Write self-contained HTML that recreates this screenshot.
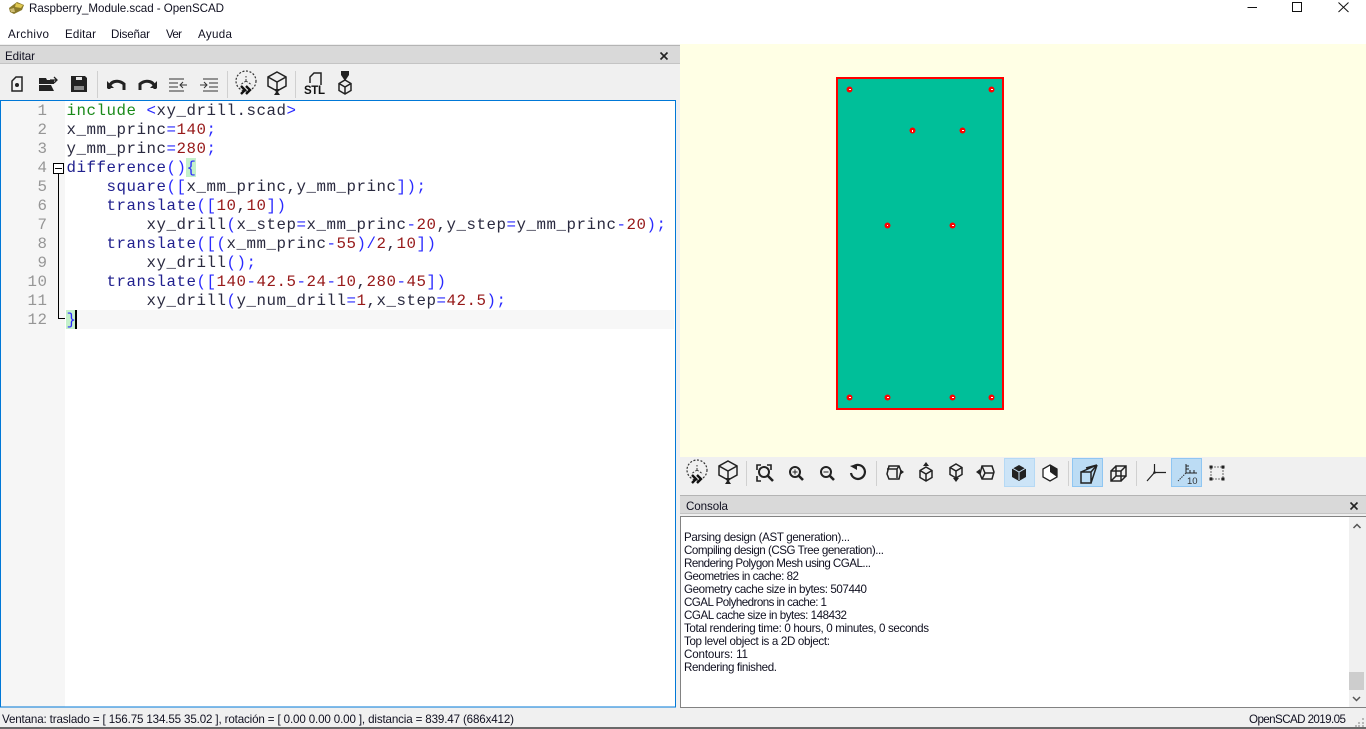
<!DOCTYPE html>
<html><head><meta charset="utf-8"><title>Raspberry_Module.scad - OpenSCAD</title>
<style>
html,body{margin:0;padding:0;background:#f0f0f0;width:1366px;height:729px;overflow:hidden}
svg{display:block}
.s{font-family:"Liberation Sans",sans-serif;font-size:11.6px;fill:#101020}
.m{font-family:"Liberation Mono",monospace;font-size:15.8px;letter-spacing:.52px;fill:#2a2a40;white-space:pre}
.n{fill:#969696}
.b{fill:#2a2aff}.r{fill:#961818}.g{fill:#1a8a1a}.d{fill:#20208e}
.i{fill:none;stroke:#222;stroke-width:1.5}
.f{fill:#222;stroke:none}
</style></head><body>
<svg width="1366" height="729" viewBox="0 0 1366 729" xmlns="http://www.w3.org/2000/svg">
<defs>
<g id="prev"><circle cx="0" cy="-3" r="10" fill="none" stroke="#333" stroke-width="1.2" stroke-dasharray="2 1.6"/><path d="M0-3V-8M0-3L-6 1M0-3L6 1" fill="none" stroke="#333" stroke-dasharray="2 1.5"/><path d="M-5 2L-1 6L-5 10M0 2L4 6L0 10" fill="none" stroke="#111" stroke-width="2.4"/></g>
<g id="rend"><path d="M0-11L9-6V3L0 8L-9 3V-6ZM-9-6L0-1L9-6M0-1V8" class="i"/><path d="M-3 6H3L1 9L3 12H-3L-1 9Z" class="f"/></g>
<g id="cube"><path d="M0-7L6-3.5V3.5L0 7L-6 3.5V-3.5ZM-6-3.5L0 0L6-3.5M0 0V7" class="i"/></g>
</defs>

<rect width="1366" height="44" fill="#fff"/>
<!-- title -->
<path d="M9 8L17 2L24 5L22 10L14 14L10 12Z" fill="#8a7a2a"/><path d="M16 3L23 5L21 8L15 7Z" fill="#e0c850"/><path d="M10 9L14 8L15 12L11 12Z" fill="#cdbb70"/>
<text class="s" x="29" y="12" textLength="195">Raspberry_Module.scad - OpenSCAD</text>
<path d="M1247.500 7.500H1257" stroke="#111" fill="none"/><rect x="1292.500" y="2.500" width="9" height="9" fill="none" stroke="#111"/><path d="M1338.500 2.500L1348.500 12M1348.500 2.500L1338.500 12" stroke="#111" fill="none"/>
<!-- menu -->
<text class="s" x="8" y="38" textLength="41">Archivo</text>
<text class="s" x="65" y="38" textLength="31">Editar</text>
<text class="s" x="111" y="38" textLength="39">Diseñar</text>
<text class="s" x="166" y="38" textLength="16">Ver</text>
<text class="s" x="198" y="38" textLength="34">Ayuda</text>

<!-- edit title band -->
<rect x="0" y="45" width="680" height="18" fill="#d9d9d9"/><rect x="0" y="45" width="680" height="1" fill="#b4b4b4"/><rect x="0" y="63" width="680" height="1" fill="#c4c4c4"/>
<text class="s" x="5" y="60" textLength="30">Editar</text>
<path d="M660.500 52.500L667.500 59.500M667.500 52.500L660.500 59.500" stroke="#222" stroke-width="1.6" fill="none"/>

<!-- editor toolbar -->
<path d="M16 77H22V91H12V81Z" class="i"/><circle cx="17" cy="85" r="2" class="f"/>
<path d="M39 78H46L47 80H54V84H39ZM39 85H51L54 91H39Z" class="f"/><path d="M50 80H57M54 77L57 80L54 83" stroke="#222" stroke-width="1.300" fill="none"/>
<path d="M71 76H85L87 78V92H71Z" class="f"/><rect x="76" y="77" width="6" height="3" fill="#e8e8e8"/><rect x="74" y="86" width="10" height="4" fill="#8a8a8a"/>
<rect x="97" y="71" width="1" height="27" fill="#d0d0d0"/>
<path d="M109 90C109 82 118 80 124 85V91" fill="none" stroke="#222" stroke-width="3" transform="translate(0 -1)"/><path d="M107 81V88H114Z" class="f"/>
<path d="M155 90C155 82 146 80 140 85V91" fill="none" stroke="#222" stroke-width="3" transform="translate(0 -1)"/><path d="M157 81V88H150Z" class="f"/>
<path d="M169 79H184M169 83H178M169 87H178M169 91H184M187 85H180M183 82L180 85L183 88" fill="none" stroke="#333"/>
<path d="M203 79H218M209 83H218M209 87H218M203 91H218M200 85H207M204 82L207 85L204 88" fill="none" stroke="#333"/>
<rect x="227" y="71" width="1" height="27" fill="#d0d0d0"/>
<use href="#prev" x="246" y="84"/><use href="#rend" x="277" y="83"/>
<rect x="295" y="71" width="1" height="27" fill="#d0d0d0"/>
<path d="M310 83V77L314 73H321V85" class="i"/><text x="304" y="94" font-family="Liberation Sans,sans-serif" font-weight="bold" font-size="11.500" fill="#111" textLength="21">STL</text>
<path d="M341 71H349V75L345 81L341 75Z" class="f"/><use href="#cube" x="345" y="87"/>

<!-- editor -->
<rect x="0" y="100" width="676" height="607" fill="#fff"/>
<rect x="1" y="101" width="64" height="606" fill="#f6f6f6"/>
<rect x="66" y="310" width="608" height="19" fill="#f7f7f7"/>
<path d="M.5 100.500H675.500V707H.5Z" fill="none" stroke="#0078d7"/>
<rect x="186" y="158" width="10" height="19" fill="#c4f1cb"/><rect x="66" y="310" width="9" height="19" fill="#c4f1cb"/>
<g class="m n" text-anchor="end">
<text class="m n" x="47.500" y="115">1</text><text class="m n" x="47.500" y="134">2</text><text class="m n" x="47.500" y="153">3</text><text class="m n" x="47.500" y="172">4</text><text class="m n" x="47.500" y="191">5</text><text class="m n" x="47.500" y="210">6</text><text class="m n" x="47.500" y="229">7</text><text class="m n" x="47.500" y="248">8</text><text class="m n" x="47.500" y="267">9</text><text class="m n" x="47.500" y="286">10</text><text class="m n" x="47.500" y="305">11</text><text class="m n" x="47.500" y="324">12</text>
</g>
<rect x="53.500" y="163.500" width="10" height="10" fill="#fff" stroke="#000"/><path d="M55 168.500H62M58.500 174V318.500H65" fill="none" stroke="#000"/>
<rect x="75" y="310" width="2" height="19" fill="#000"/>
<text class="m" x="66.500" y="115" xml:space="preserve"><tspan class="g">include</tspan> <tspan class="b">&lt;</tspan>xy_drill.scad<tspan class="b">&gt;</tspan></text>
<text class="m" x="66.500" y="134" xml:space="preserve">x_mm_princ<tspan class="b">=</tspan><tspan class="r">140</tspan><tspan class="b">;</tspan></text>
<text class="m" x="66.500" y="153" xml:space="preserve">y_mm_princ<tspan class="b">=</tspan><tspan class="r">280</tspan><tspan class="b">;</tspan></text>
<text class="m" x="66.500" y="172" xml:space="preserve"><tspan class="d">difference</tspan><tspan class="b">(){</tspan></text>
<text class="m" x="106.500" y="191" xml:space="preserve"><tspan class="d">square</tspan><tspan class="b">([</tspan>x_mm_princ,y_mm_princ<tspan class="b">]);</tspan></text>
<text class="m" x="106.500" y="210" xml:space="preserve"><tspan class="d">translate</tspan><tspan class="b">([</tspan><tspan class="r">10</tspan>,<tspan class="r">10</tspan><tspan class="b">])</tspan></text>
<text class="m" x="146.500" y="229" xml:space="preserve">xy_drill<tspan class="b">(</tspan>x_step<tspan class="b">=</tspan>x_mm_princ<tspan class="b">-</tspan><tspan class="r">20</tspan>,y_step<tspan class="b">=</tspan>y_mm_princ<tspan class="b">-</tspan><tspan class="r">20</tspan><tspan class="b">);</tspan></text>
<text class="m" x="106.500" y="248" xml:space="preserve"><tspan class="d">translate</tspan><tspan class="b">([(</tspan>x_mm_princ<tspan class="b">-</tspan><tspan class="r">55</tspan><tspan class="b">)/</tspan><tspan class="r">2</tspan>,<tspan class="r">10</tspan><tspan class="b">])</tspan></text>
<text class="m" x="146.500" y="267" xml:space="preserve">xy_drill<tspan class="b">();</tspan></text>
<text class="m" x="106.500" y="286" xml:space="preserve"><tspan class="d">translate</tspan><tspan class="b">([</tspan><tspan class="r">140</tspan><tspan class="b">-</tspan><tspan class="r">42.5</tspan><tspan class="b">-</tspan><tspan class="r">24</tspan><tspan class="b">-</tspan><tspan class="r">10</tspan>,<tspan class="r">280</tspan><tspan class="b">-</tspan><tspan class="r">45</tspan><tspan class="b">])</tspan></text>
<text class="m" x="146.500" y="305" xml:space="preserve">xy_drill<tspan class="b">(</tspan>y_num_drill<tspan class="b">=</tspan><tspan class="r">1</tspan>,x_step<tspan class="b">=</tspan><tspan class="r">42.5</tspan><tspan class="b">);</tspan></text>
<text class="m" x="66.500" y="324" xml:space="preserve"><tspan class="b">}</tspan></text>

<!-- viewport -->
<rect x="680" y="44" width="686" height="413" fill="#ffffe5"/>
<rect x="837" y="78" width="166" height="331" fill="#00bf99" stroke="#f00" stroke-width="2"/>
<g fill="#f00">
<circle cx="849.500" cy="89.500" r="3"/><circle cx="991.500" cy="89.500" r="3"/><circle cx="912.500" cy="130.500" r="3"/><circle cx="962.500" cy="130.500" r="3"/><circle cx="887.500" cy="225.500" r="3"/><circle cx="952.500" cy="225.500" r="3"/><circle cx="849.500" cy="397.500" r="3"/><circle cx="887.500" cy="397.500" r="3"/><circle cx="952.500" cy="397.500" r="3"/><circle cx="991.500" cy="397.500" r="3"/>
</g>
<g fill="#fff">
<rect x="849" y="89" width="2" height="1"/><rect x="991" y="89" width="2" height="1"/><rect x="912" y="130" width="1" height="2"/><rect x="962" y="130" width="2" height="1"/><rect x="887" y="225" width="1" height="1"/><rect x="952" y="225" width="2" height="1"/><rect x="849" y="397" width="2" height="1"/><rect x="887" y="397" width="2" height="1"/><rect x="952" y="397" width="2" height="1"/><rect x="991" y="397" width="2" height="1"/>
</g>

<!-- view toolbar -->
<use href="#prev" x="697" y="473"/><use href="#rend" x="728" y="472"/>
<rect x="746" y="461" width="1" height="25" fill="#d0d0d0"/>
<path d="M757 470V465H761M767 465H771V470M757 476V481H761" fill="none" stroke="#222" stroke-width="1.600"/><circle cx="764" cy="472" r="5" fill="none" stroke="#222" stroke-width="2"/><path d="M768 476L773 481" stroke="#222" stroke-width="2.600"/>
<circle cx="795" cy="472" r="5" fill="none" stroke="#222" stroke-width="2"/><path d="M799 476L803 480" stroke="#222" stroke-width="2.600"/><path d="M792.500 472H797.500M795 469.500V474.500" stroke="#222"/>
<circle cx="826" cy="472" r="5" fill="none" stroke="#222" stroke-width="2"/><path d="M830 476L834 480" stroke="#222" stroke-width="2.600"/><path d="M823.500 472H828.500" stroke="#222"/>
<path d="M853.500 466.500A7 7 0 1 1 851 473" fill="none" stroke="#222" stroke-width="2.200"/><path d="M850 466L857 464V470Z" class="f"/>
<rect x="876" y="461" width="1" height="25" fill="#d0d0d0"/>
<path d="M889 466H899L901 471L899 479H889L887 474ZM887 469H897L899 466M897 469V478" class="i" stroke-width="1.200"/><path d="M900 469L904 472L900 475Z" class="f"/>
<use href="#cube" x="926" y="474"/><path d="M923 466L926 462L929 466Z" class="f"/>
<use href="#cube" x="956" y="471"/><path d="M953 478L956 482L959 478Z" class="f"/>
<path d="M982 466H992L994 472L992 479H982L980 474ZM982 466L985 473H994M985 473L982 479" class="i" stroke-width="1.200"/><path d="M980 469L976 472L980 475Z" class="f"/>
<rect x="1004.500" y="458.500" width="30" height="28" fill="#cce4f7" stroke="#b5d9f5"/>
<path d="M1019 466L1026 470V478L1019 482L1012 478V470Z" class="f" transform="translate(0 -1)"/><path d="M1012 469L1019 473L1026 469" stroke="#cce4f7" fill="none" transform="translate(0 -1)"/><path d="M1019 472V480" stroke="#cce4f7"/>
<path d="M1050 466L1057 470V478L1050 482L1043 478V470Z" fill="#fff" stroke="#222" stroke-width="1.300" transform="translate(0 -1)"/><path d="M1050 465L1057 469V477L1050 472Z" class="f"/>
<rect x="1068" y="461" width="1" height="25" fill="#d0d0d0"/>
<rect x="1072.500" y="458.500" width="30" height="28" fill="#bcdcf4" stroke="#8fc6f2"/>
<path d="M1081 472V483H1091V472ZM1081 472L1097 465M1091 472L1097 465M1091 483L1097 465M1086 468L1097 465" class="i"/>
<path d="M1111 471H1121V481H1111ZM1116 466H1126V476H1116ZM1111 471L1116 466M1121 471L1126 466M1121 481L1126 476M1111 481L1116 476M1116 466V476H1126" class="i" stroke-width="1.200"/>
<rect x="1136" y="461" width="1" height="25" fill="#d0d0d0"/>
<path d="M1154.500 464V472.500H1166M1154.500 472.500L1147 481" fill="none" stroke="#222" stroke-width="1.200"/><circle cx="1154.500" cy="472.500" r="1.300" class="f"/>
<rect x="1171.500" y="458.500" width="30" height="28" fill="#bcdcf4" stroke="#8fc6f2"/>
<path d="M1186 464V473H1197M1186 466H1189M1186 469H1189M1190 473V470M1194 473V470" fill="none" stroke="#222"/><path d="M1186 473L1178 481" stroke="#333" stroke-dasharray="1.500 1" fill="none"/>
<text x="1187" y="484" font-family="Liberation Sans,sans-serif" font-size="9.500" fill="#333">10</text>
<rect x="1211" y="467" width="12" height="12" fill="none" stroke="#444" stroke-width=".8" stroke-dasharray="2 1"/><path d="M1209.500 465.500h3v3h-3zM1221.500 465.500h3v3h-3zM1209.500 477.500h3v3h-3zM1221.500 477.500h3v3h-3z" class="f" stroke="none"/>

<!-- console -->
<rect x="680" y="496" width="686" height="17" fill="#d9d9d9"/><rect x="680" y="495" width="686" height="1" fill="#b4b4b4"/><rect x="680" y="513" width="686" height="1" fill="#c4c4c4"/>
<text class="s" x="686" y="510" textLength="42">Consola</text>
<path d="M1350.500 502.500L1357.500 509.500M1357.500 502.500L1350.500 509.500" stroke="#222" stroke-width="1.600" fill="none"/>
<rect x="680" y="516" width="686" height="192" fill="#fff"/>
<path d="M680.500 707.500V516.500H1366M680 707.500H1366" fill="none" stroke="#828282"/>
<rect x="1349" y="517" width="17" height="190" fill="#f0f0f0"/><rect x="1349" y="672" width="15" height="18" fill="#cdcdcd"/>
<path d="M1353.500 528L1357 524.500L1360.500 528M1353 697L1356.500 700.500L1360 697" fill="none" stroke="#555" stroke-width="1.500"/>
<text class="s" x="684" y="541" textLength="166">Parsing design (AST generation)...</text>
<text class="s" x="684" y="554" textLength="200">Compiling design (CSG Tree generation)...</text>
<text class="s" x="684" y="567" textLength="187">Rendering Polygon Mesh using CGAL...</text>
<text class="s" x="684" y="580" textLength="115">Geometries in cache: 82</text>
<text class="s" x="684" y="593" textLength="183">Geometry cache size in bytes: 507440</text>
<text class="s" x="684" y="606" textLength="143">CGAL Polyhedrons in cache: 1</text>
<text class="s" x="684" y="619" textLength="163">CGAL cache size in bytes: 148432</text>
<text class="s" x="684" y="632" textLength="245">Total rendering time: 0 hours, 0 minutes, 0 seconds</text>
<text class="s" x="684" y="645" textLength="146">Top level object is a 2D object:</text>
<text class="s" x="684" y="658" textLength="64">Contours: 11</text>
<text class="s" x="684" y="671" textLength="93">Rendering finished.</text>

<!-- status -->
<text class="s" x="2" y="723" textLength="512">Ventana: traslado = [ 156.75 134.55 35.02 ], rotación = [ 0.00 0.00 0.00 ], distancia = 839.47 (686x412)</text>
<text class="s" x="1249" y="723" textLength="97">OpenSCAD 2019.05</text>
<g fill="#b8b8b8"><rect x="1362" y="718" width="2" height="2"/><rect x="1362" y="722" width="2" height="2"/><rect x="1358" y="722" width="2" height="2"/><rect x="1362" y="725" width="2" height="2"/><rect x="1358" y="725" width="2" height="2"/><rect x="1355" y="725" width="2" height="2"/></g>
<rect x="0" y="727" width="1366" height="2" fill="#6a6a6a"/>
</svg>
</body></html>
